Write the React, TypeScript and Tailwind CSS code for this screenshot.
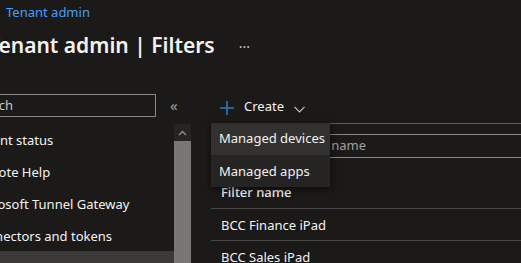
import React from 'react';

const navItems = ['Tenant status', 'Remote Help', 'Microsoft Tunnel Gateway', 'Connectors and tokens', 'Filters'];

const rows = ['BCC Finance iPad', 'BCC Sales iPad'];

const App = () => {
  return (
    <div
      className="relative h-[263px] w-[521px] overflow-hidden bg-[#1b1a19] text-[13px] text-[#f3f2f1]"
      style={{ fontFamily: '"Noto Sans", "Open Sans", sans-serif' }}
    >
      {/* //Breadcrumb */}
      <div className="flex h-[26px] items-center pl-[6px] text-[#479ef5]">Tenant admin</div>

      {/* //Title */}
      <div className="flex h-[40px] items-center">
        <h1 className="ml-[-12px] text-[21px] font-semibold">Tenant admin | Filters</h1>
        <span className="ml-[24px] text-[14px] text-[#c8c6c4]">···</span>
      </div>

      <div className="flex">
        {/* //Left menu */}
        <div className="w-[191px] shrink-0">
          <div className="mt-[28px] flex h-[23px] items-center">
            <div className="ml-[-60px] flex h-[23px] w-[216px] shrink-0 items-center border border-[#8a8886] pl-[6px] text-[#c8c6c4]">
              <span className="ml-[25px]">Search</span>
            </div>
            <span className="ml-[14px] text-[15px] text-[#a19f9d]">«</span>
          </div>

          <div className="mt-[8px] flex">
            <ul className="w-[174px] shrink-0 overflow-hidden">
              {navItems.map((item, i) => (
                <li
                  key={i}
                  className={`flex h-[32px] items-center whitespace-nowrap ${i === 4 ? 'mt-[-2px] bg-[#3b3a39]' : ''}`}
                >
                  <span className="ml-[-29px]">{item}</span>
                </li>
              ))}
            </ul>
            <div className="mt-[-1px] flex w-[17px] shrink-0 flex-col">
              <div className="flex h-[17px] items-center justify-center bg-[#252423]">
                <svg width="9" height="6" viewBox="0 0 9 6">
                  <path d="M1 5 L4.5 1.5 L8 5" stroke="#8a8886" strokeWidth="1.5" fill="none" />
                </svg>
              </div>
              <div className="h-[200px] bg-[#797775]"></div>
            </div>
          </div>
        </div>

        {/* //Main */}
        <div className="flex-1 pl-[20px]">
          <div className="mt-[26px] flex h-[31px] items-end pb-[7px]">
            <svg className="ml-[9px] mb-[1px]" width="14" height="14" viewBox="0 0 14 14">
              <path d="M7 0 V14 M0 7 H14" stroke="#2b7bc0" strokeWidth="1.6" />
            </svg>
            <span className="ml-[10px]">Create</span>
            <svg className="ml-[10px] mb-[3px]" width="11" height="7" viewBox="0 0 11 7">
              <path d="M0.5 0.8 L5.5 5.8 L10.5 0.8" stroke="#c8c6c4" strokeWidth="1.2" fill="none" />
            </svg>
          </div>
          <div className="h-[1px] bg-[#605e5c]"></div>

          {/* //Filter search */}
          <div className="mt-[10px] flex h-[24px] items-center border border-r-0 border-[#8a8886] pl-[26px] text-[#a19f9d]">
            <svg className="mr-[18px]" width="13" height="13" viewBox="0 0 13 13">
              <circle cx="7.5" cy="5.5" r="4" stroke="#c8c6c4" strokeWidth="1.2" fill="none" />
              <path d="M4.6 8.4 L1 12" stroke="#c8c6c4" strokeWidth="1.2" />
            </svg>
            Search by name
          </div>

          <div className="flex h-[51px] items-end border-b border-[#484644] pb-[6px] pl-[10px] font-medium">
            Filter name
          </div>
          {rows.map((row, i) => (
            <div key={i} className="flex h-[32px] items-center border-b border-[#484644] pl-[10px] pt-[2px]">
              {row}
            </div>
          ))}
        </div>
      </div>

      {/* //Create dropdown */}
      <div className="absolute left-[211px] top-[123px] w-[119px] bg-[#252423] shadow-[0_2px_8px_rgba(0,0,0,0.6)]">
        <div className="flex h-[32px] items-center bg-[#323130] pl-[8px]">Managed devices</div>
        <div className="flex h-[32px] items-center pl-[8px] pt-[2px]">Managed apps</div>
      </div>
    </div>
  );
};

export default App;
